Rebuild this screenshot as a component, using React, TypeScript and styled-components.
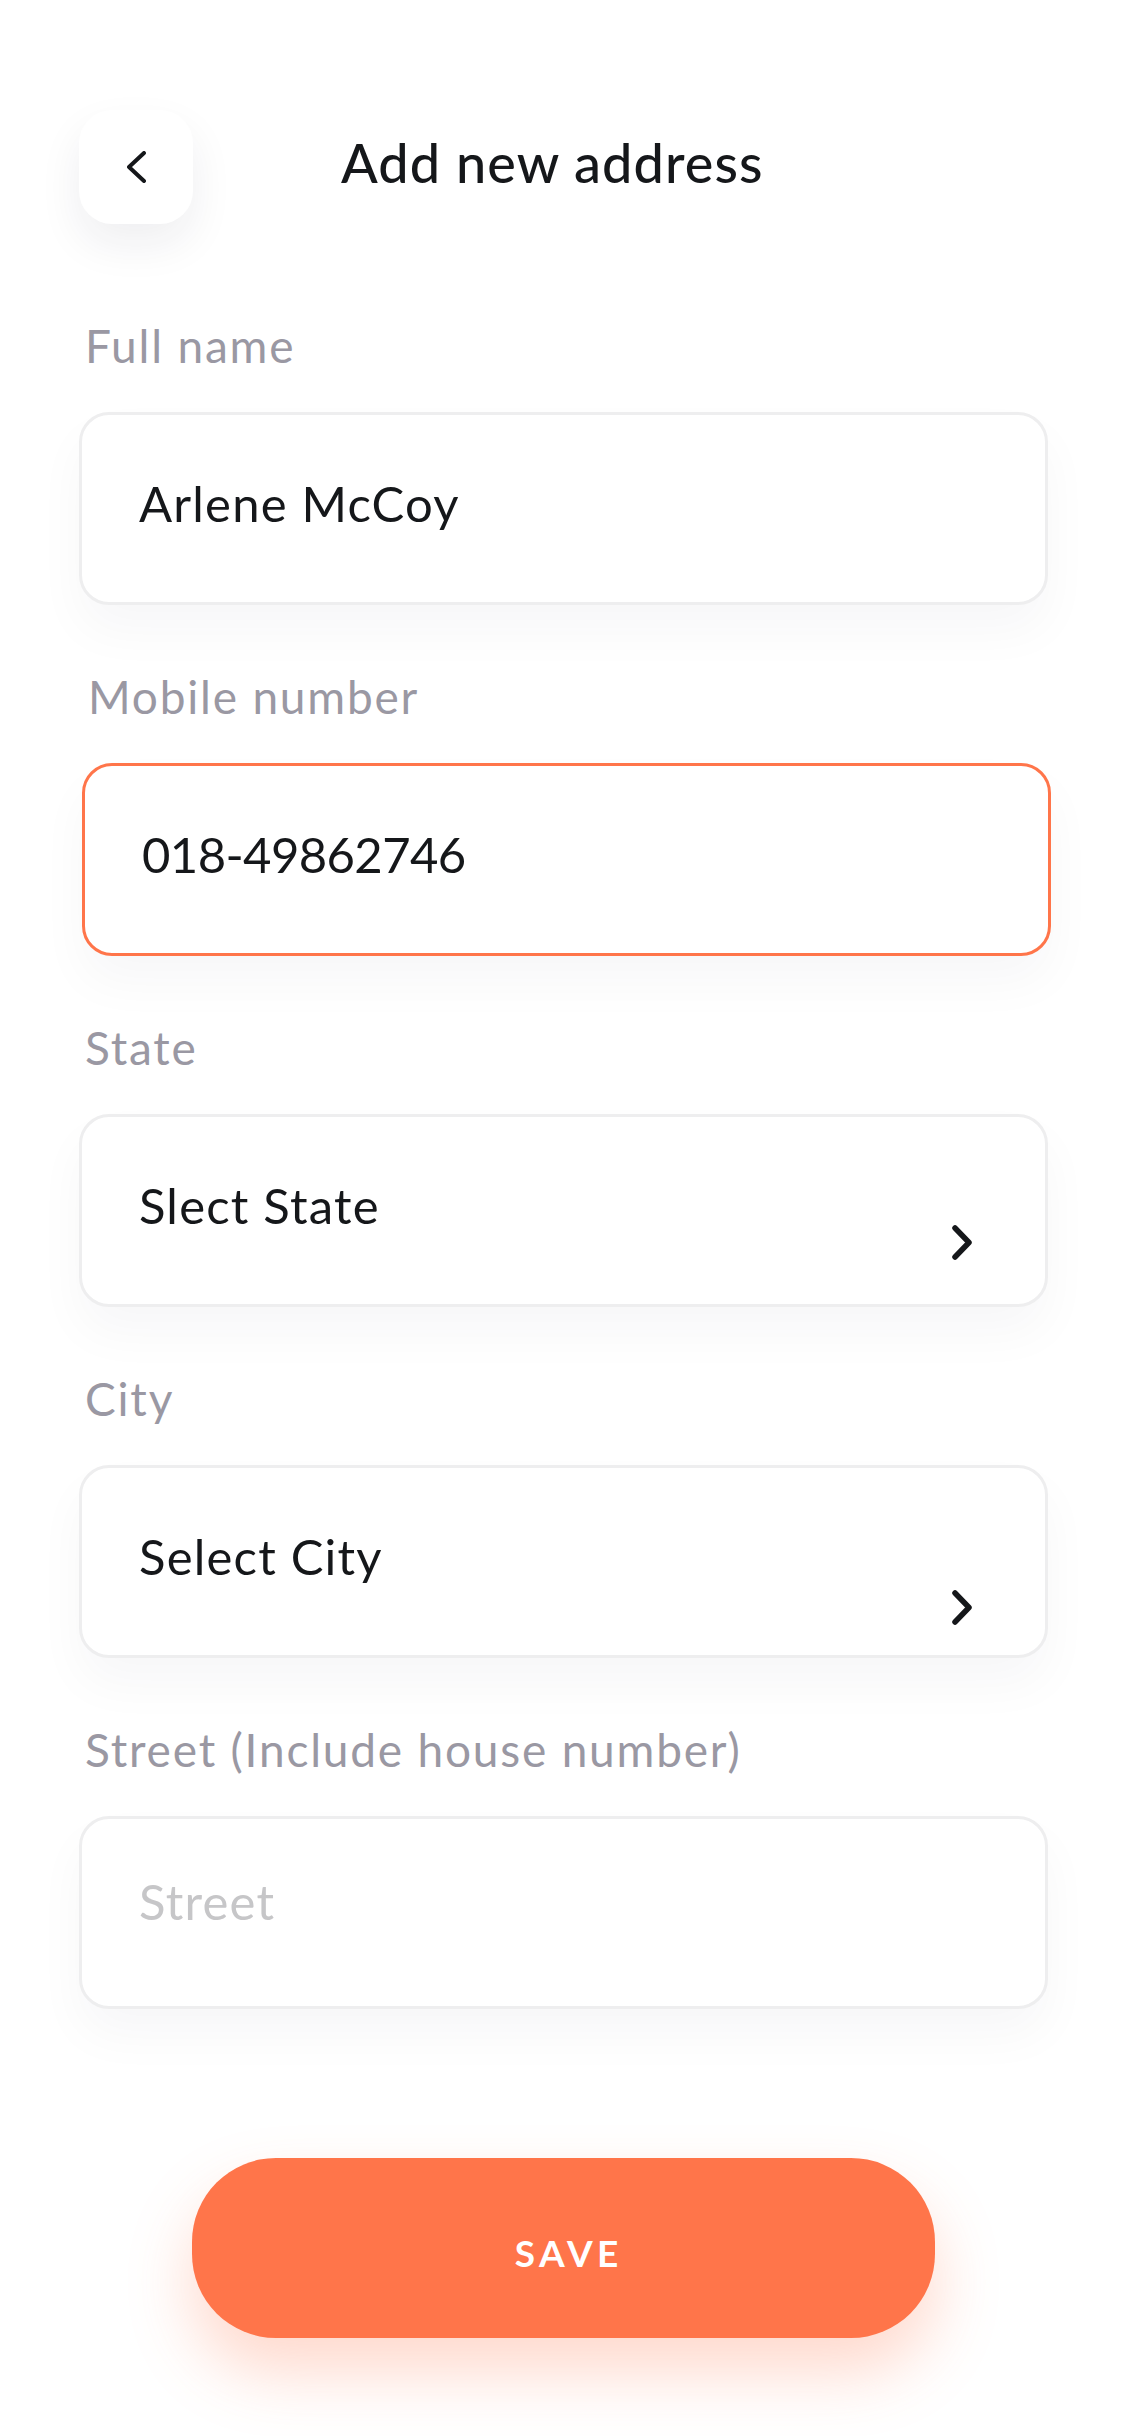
import React from "react";
import styled, { createGlobalStyle } from "styled-components";

const Global = createGlobalStyle`
  html, body { margin: 0; padding: 0; background: #ffffff; }
  body { font-family: Lato, "Noto Sans", sans-serif; -webkit-font-smoothing: antialiased; }
  * { box-sizing: border-box; }
`;

const Page = styled.div`
  width: 1125px;
  min-height: 2436px;
  padding: 110px 77px 0 79px;
  background: #ffffff;
  display: flex;
  flex-direction: column;
`;

const Header = styled.header`
  display: flex;
  align-items: center;
  gap: 148px;
  height: 114px;
`;

const BackButton = styled.button`
  width: 114px;
  height: 114px;
  flex: none;
  border: none;
  border-radius: 33px;
  background: #ffffff;
  box-shadow: 0 20px 44px rgba(30, 30, 50, 0.07);
  display: flex;
  align-items: center;
  justify-content: center;
  padding: 0;
  cursor: pointer;
`;

const Title = styled.h1`
  margin: 0 0 8px;
  font-size: 54px;
  line-height: 1.2;
  font-weight: 500;
  letter-spacing: 1.1px;
  color: #15171a;
`;

const Form = styled.form`
  margin-top: 94px;
  display: flex;
  flex-direction: column;
  gap: 64px;
`;

const Field = styled.div<{ $shift?: number }>`
  display: flex;
  flex-direction: column;
  gap: 38px;
  margin-left: ${(p) => p.$shift ?? 0}px;
  margin-right: ${(p) => -(p.$shift ?? 0)}px;
`;

const Label = styled.label`
  font-size: 46px;
  line-height: 56px;
  letter-spacing: 1.8px;
  color: #9a98a3;
  padding-left: 6px;
`;

const Box = styled.div<{ $active?: boolean }>`
  height: 193px;
  border: 3px solid ${(p) => (p.$active ? "#ff754a" : "#eeeeef")};
  border-radius: 30px;
  background: #ffffff;
  box-shadow: 0 26px 50px rgba(30, 30, 50, 0.035);
  padding: 0 73px 0 57px;
  display: flex;
  align-items: center;
  justify-content: space-between;
`;

const Value = styled.span<{ $lift?: number; $placeholder?: boolean; $tracking?: number }>`
  font-size: 49px;
  line-height: 1.2;
  letter-spacing: ${(p) => p.$tracking ?? 1.2}px;
  color: ${(p) => (p.$placeholder ? "#c6c6c8" : "#15171a")};
  margin-bottom: ${(p) => (p.$lift ?? 0) * 2}px;
`;

const Chevron = styled.svg<{ $drop: number }>`
  flex: none;
  margin-top: ${(p) => p.$drop * 2}px;
`;

const SaveButton = styled.button`
  margin-top: 149px;
  align-self: center;
  width: 743px;
  height: 180px;
  border: none;
  border-radius: 84px;
  background: #ff754a;
  box-shadow: 0 34px 64px rgba(255, 117, 74, 0.28);
  color: #ffffff;
  font-family: Lato, "Noto Sans", sans-serif;
  font-size: 37px;
  font-weight: 700;
  letter-spacing: 0.12em;
  padding: 9px 0 0 calc(0.12em + 6px);
  cursor: pointer;
`;

const BackIcon = () => (
  <svg width="19" height="32" viewBox="0 0 19 32" fill="none">
    <path d="M17 2 L2 16 L17 30" stroke="#15171a" strokeWidth="4" strokeLinecap="round" strokeLinejoin="round" />
  </svg>
);

const NextIcon = ({ drop }: { drop: number }) => (
  <Chevron $drop={drop} width="20" height="35" viewBox="0 0 20 35" fill="none">
    <path d="M3 3 L17 17.5 L3 32" stroke="#15171a" strokeWidth="5.5" strokeLinecap="round" strokeLinejoin="round" />
  </Chevron>
);

export default function App() {
  return (
    <>
      <Global />
      <Page>
        <Header>
          <BackButton type="button" aria-label="Back">
            <BackIcon />
          </BackButton>
          <Title>Add new address</Title>
        </Header>
        <Form onSubmit={(e) => e.preventDefault()}>
          <Field>
            <Label>Full name</Label>
            <Box>
              <Value $lift={5}>Arlene McCoy</Value>
            </Box>
          </Field>
          <Field $shift={3}>
            <Label>Mobile number</Label>
            <Box $active>
              <Value $lift={5} $tracking={-0.6}>018-49862746</Value>
            </Box>
          </Field>
          <Field>
            <Label>State</Label>
            <Box>
              <Value $lift={5}>Slect State</Value>
              <NextIcon drop={32} />
            </Box>
          </Field>
          <Field>
            <Label>City</Label>
            <Box>
              <Value $lift={5}>Select City</Value>
              <NextIcon drop={46} />
            </Box>
          </Field>
          <Field>
            <Label>Street (Include house number)</Label>
            <Box>
              <Value $lift={11} $placeholder>Street</Value>
            </Box>
          </Field>
        </Form>
        <SaveButton type="button">SAVE</SaveButton>
      </Page>
    </>
  );
}
